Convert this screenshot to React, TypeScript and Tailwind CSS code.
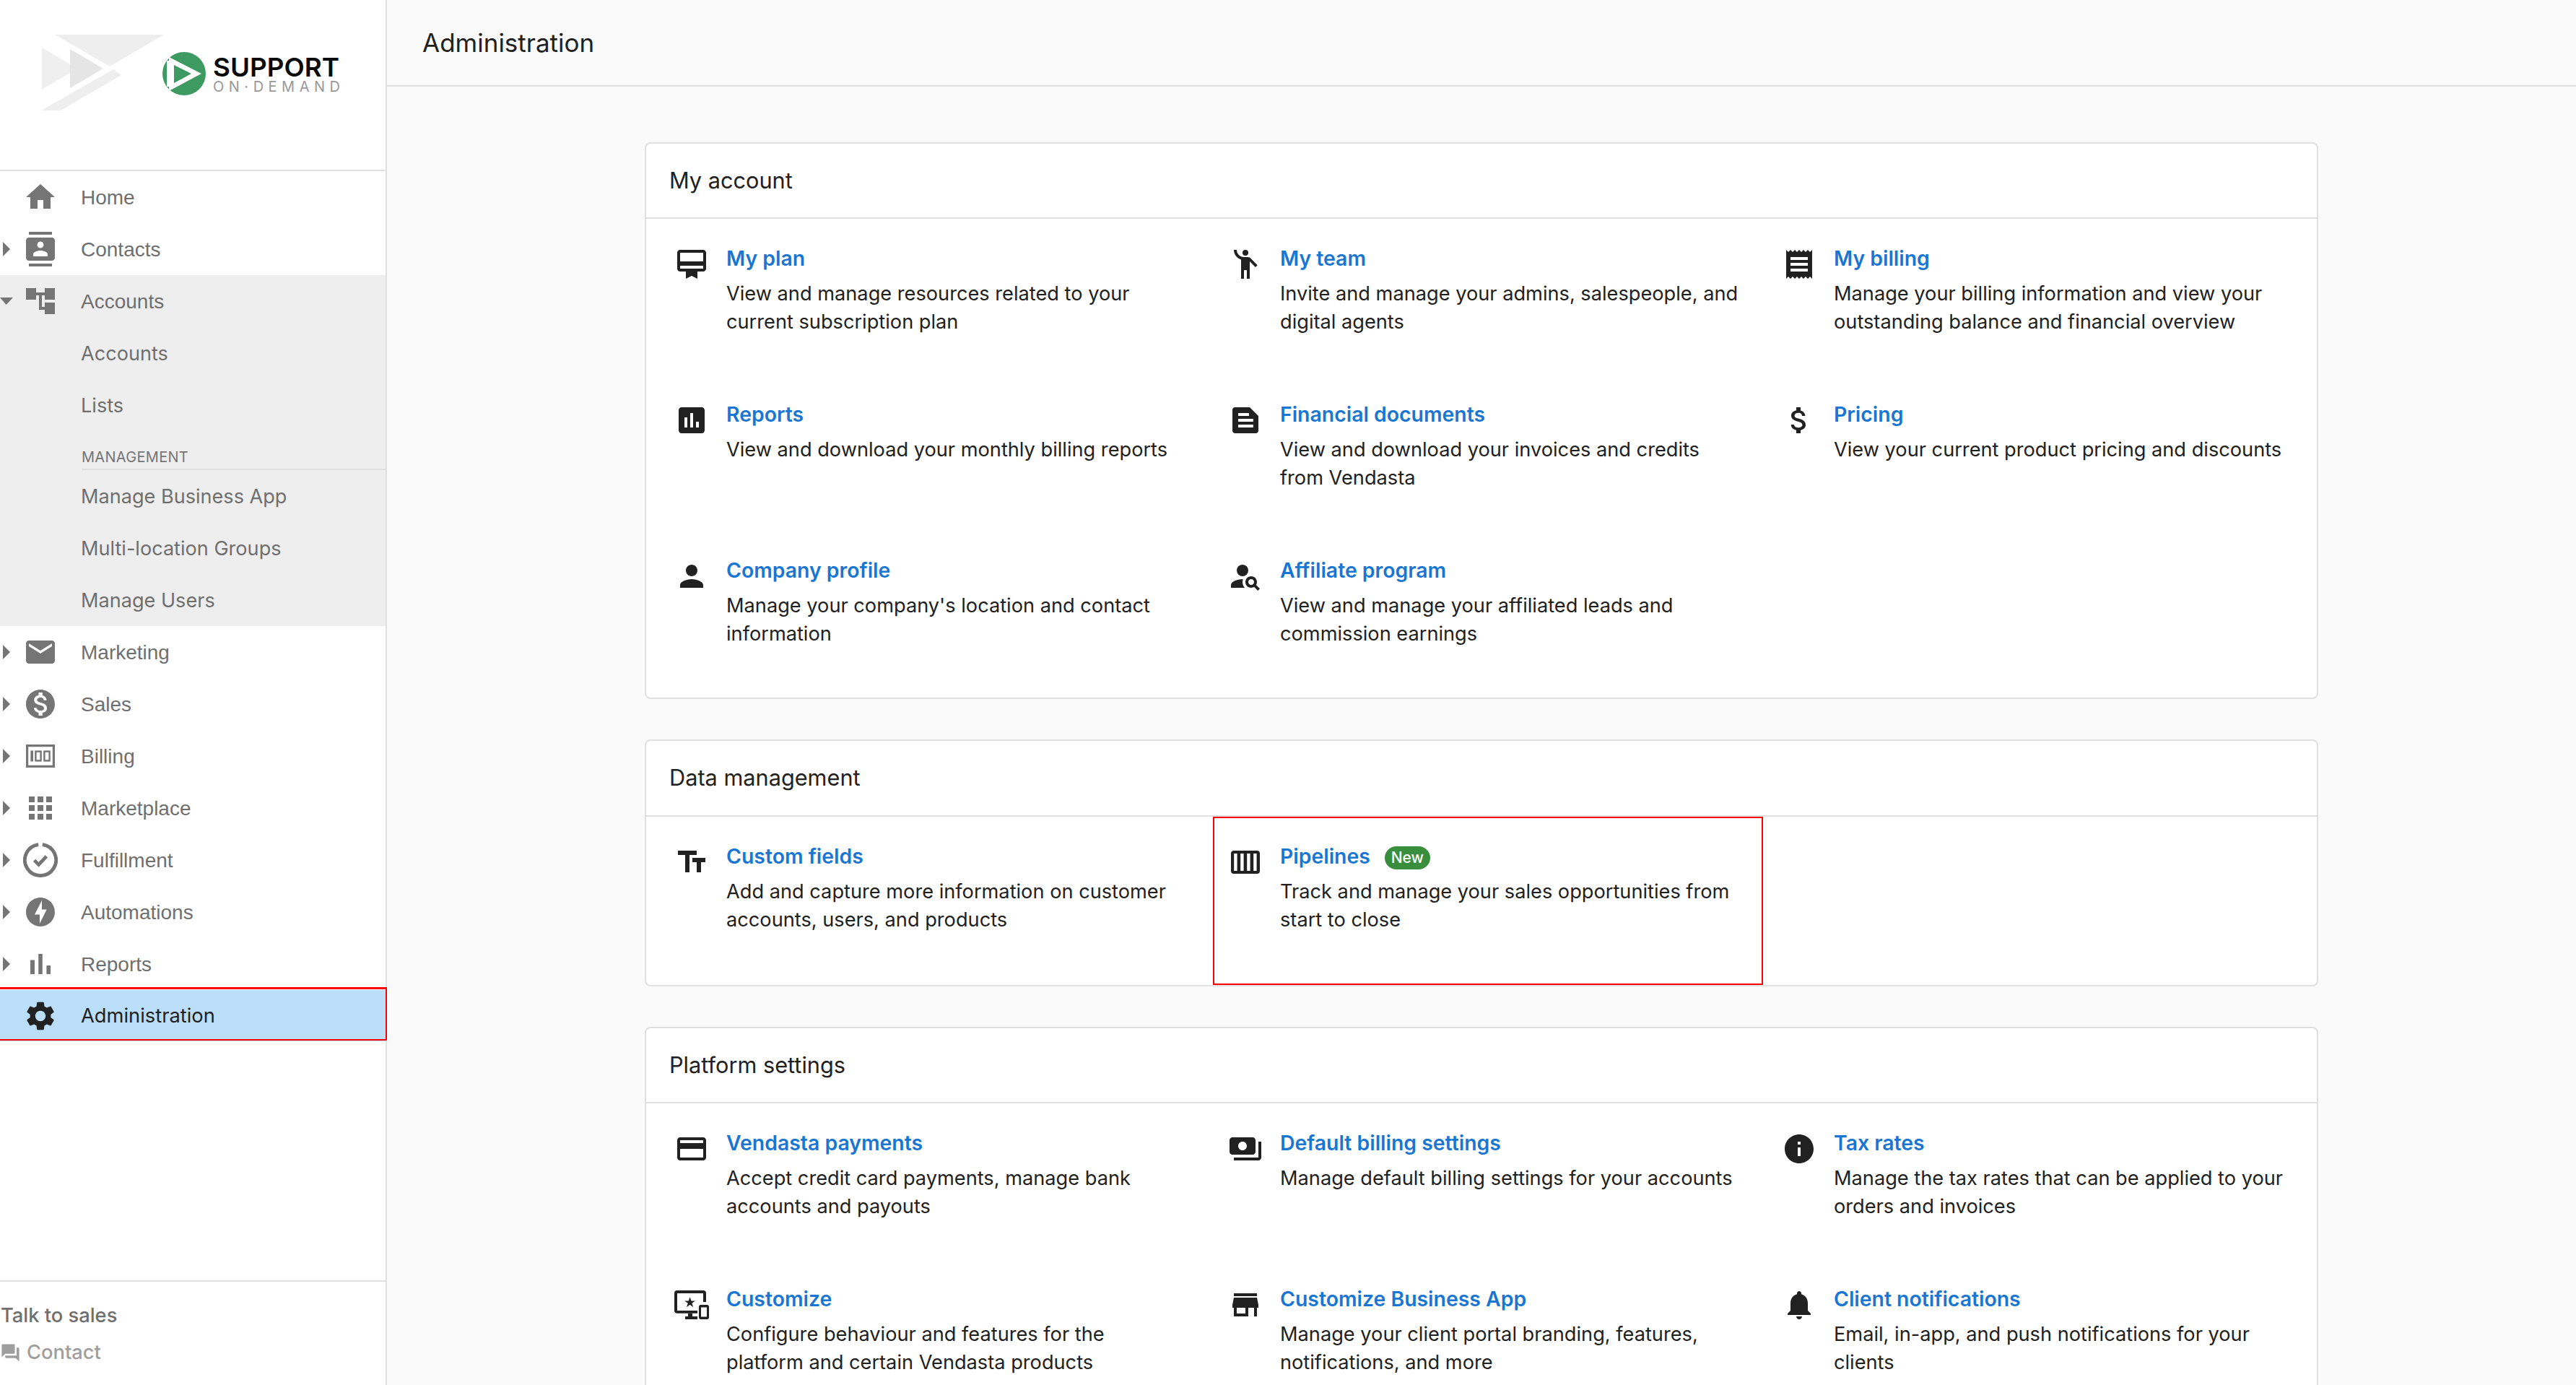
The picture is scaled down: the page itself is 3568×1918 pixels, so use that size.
import React from 'react'

type IconProps = { children: React.ReactNode; className?: string }

const Svg = ({ children, className = 'w-[48px] h-[48px]' }: IconProps) => (
  <svg viewBox="0 0 24 24" fill="currentColor" className={`${className} shrink-0`}>
    {children}
  </svg>
)

// sidebar icons
const navIcons: Record<string, React.ReactNode> = {
  home: <path d="M10 20v-6h4v6h5v-8h3L12 3 2 12h3v8z" />,
  contacts: <path d="M20 0H4v2h16V0zM4 24h16v-2H4v2zM20 4H4c-1.1 0-2 .9-2 2v12c0 1.1.9 2 2 2h16c1.1 0 2-.9 2-2V6c0-1.1-.9-2-2-2zm-8 2.75c1.24 0 2.25 1.01 2.25 2.25s-1.01 2.25-2.25 2.25S9.75 10.24 9.75 9 10.76 6.75 12 6.75zM17 17H7v-1.5c0-1.67 3.33-2.5 5-2.5s5 .83 5 2.5V17z" />,
  accounts: <path d="M22 11V3h-7v3H9V3H2v8h7V8h2v10h4v3h7v-8h-7v3h-2V8h2v3z" />,
  marketing: <path d="M20 4H4c-1.1 0-1.99.9-1.99 2L2 18c0 1.1.9 2 2 2h16c1.1 0 2-.9 2-2V6c0-1.1-.9-2-2-2zm0 4l-8 5-8-5V6l8 5 8-5v2z" />,
  sales: <path d="M12 2C6.48 2 2 6.48 2 12s4.48 10 10 10 10-4.48 10-10S17.52 2 12 2zm1.41 16.09V20h-2.67v-1.93c-1.71-.36-3.16-1.46-3.27-3.4h1.96c.1 1.05.82 1.87 2.65 1.87 1.96 0 2.4-.98 2.4-1.59 0-.83-.44-1.61-2.67-2.14-2.48-.6-4.18-1.62-4.18-3.67 0-1.72 1.39-2.84 3.11-3.21V4h2.67v1.95c1.86.45 2.79 1.86 2.85 3.39H14.3c-.05-1.11-.64-1.87-2.22-1.87-1.5 0-2.4.68-2.4 1.64 0 .84.65 1.39 2.67 1.91s4.18 1.39 4.18 3.91c-.01 1.83-1.38 2.83-3.12 3.16z" />,
  billing: (
    <>
      <rect x="2.8" y="4.8" width="18.4" height="14.4" fill="none" stroke="currentColor" strokeWidth="1.6" />
      <rect x="5.2" y="8.25" width="1.8" height="7.5" />
      <rect x="8.7" y="8.8" width="3.6" height="6.4" fill="none" stroke="currentColor" strokeWidth="1.2" />
      <rect x="14.7" y="8.8" width="3.6" height="6.4" fill="none" stroke="currentColor" strokeWidth="1.2" />
    </>
  ),
  marketplace: <path d="M4 8h4V4H4v4zm6 12h4v-4h-4v4zm-6 0h4v-4H4v4zm0-6h4v-4H4v4zm6 0h4v-4h-4v4zm6-10v4h4V4h-4zm-6 4h4V4h-4v4zm6 6h4v-4h-4v4zm0 6h4v-4h-4v4z" />,
  fulfillment: (
    <>
      <path d="M10.6 1.3A10.8 10.8 0 1 0 13.4 1.3" fill="none" stroke="currentColor" strokeWidth="2.4" />
      <path d="M7.8 12.2l3 3 5.4-5.8" fill="none" stroke="currentColor" strokeWidth="2.4" />
    </>
  ),
  automations: <path d="M12 2.02c-5.51 0-9.98 4.47-9.98 9.98s4.47 9.98 9.98 9.98 9.98-4.47 9.98-9.98S17.51 2.02 12 2.02zM11.48 20v-6.26H8L13 4v6.26h3.35L11.48 20z" />,
  reports: <path d="M5 9.2h3V19H5zM10.6 5h2.8v14h-2.8zm5.6 8H19v6h-2.8z" />,
  settings: <path d="M19.14 12.94c.04-.3.06-.61.06-.94 0-.32-.02-.64-.07-.94l2.03-1.58c.18-.14.23-.41.12-.61l-1.92-3.32c-.12-.22-.37-.29-.59-.22l-2.39.96c-.5-.38-1.03-.7-1.62-.94l-.36-2.54c-.04-.24-.24-.41-.48-.41h-3.84c-.24 0-.43.17-.47.41l-.36 2.54c-.59.24-1.13.57-1.62.94l-2.39-.96c-.22-.08-.47 0-.59.22L2.74 8.87c-.12.21-.08.47.12.61l2.03 1.58c-.05.3-.09.63-.09.94s.02.64.07.94l-2.03 1.58c-.18.14-.23.41-.12.61l1.92 3.32c.12.22.37.29.59.22l2.39-.96c.5.38 1.03.7 1.62.94l.36 2.54c.05.24.24.41.48.41h3.84c.24 0 .44-.17.47-.41l.36-2.54c.59-.24 1.13-.56 1.62-.94l2.39.96c.22.08.47 0 .59-.22l1.92-3.32c.12-.22.07-.47-.12-.61l-2.01-1.58zM12 15.6c-1.98 0-3.6-1.62-3.6-3.6s1.62-3.6 3.6-3.6 3.6 1.62 3.6 3.6-1.62 3.6-3.6 3.6z" />,
}

// card icons
const cardIcons: Record<string, React.ReactNode> = {
  plan: <path d="M20 2H4c-1.11 0-2 .89-2 2v11c0 1.11.89 2 2 2h4v5l4-2 4 2v-5h4c1.11 0 2-.89 2-2V4c0-1.11-.89-2-2-2zm0 13H4v-2h16v2zm0-5H4V4h16v6z" />,
  team: (
    <>
      <circle cx="12" cy="4" r="2" />
      <path d="M15.89 8.11C15.5 7.72 14.83 7 13.53 7c-.21 0-1.42 0-2.54 0C8.24 6.99 6 4.75 6 2H4c0 3.16 2.11 5.84 5 6.71V22h2v-6h2v6h2V10.05L18.95 14l1.41-1.41-4.47-4.48z" />
    </>
  ),
  receipt: <path fillRule="evenodd" d="M18 17H6v-2h12v2zm0-4H6v-2h12v2zm0-4H6V7h12v2zM3 22l1.5-1.5L6 22l1.5-1.5L9 22l1.5-1.5L12 22l1.5-1.5L15 22l1.5-1.5L18 22l1.5-1.5L21 22V2l-1.5 1.5L18 2l-1.5 1.5L15 2l-1.5 1.5L12 2l-1.5 1.5L9 2 7.5 3.5 6 2 4.5 3.5 3 2v20z" />,
  assessment: <path d="M19 3H5c-1.1 0-2 .9-2 2v14c0 1.1.9 2 2 2h14c1.1 0 2-.9 2-2V5c0-1.1-.9-2-2-2zM9 17H7v-7h2v7zm4 0h-2V7h2v10zm4 0h-2v-4h2v4z" />,
  doc: <path fillRule="evenodd" d="M5 3h10l6 6v10a2 2 0 0 1-2 2H5a2 2 0 0 1-2-2V5a2 2 0 0 1 2-2zm2 4v2h7.5V7H7zm0 4v2h10.4v-2H7zm0 4v2h10.4v-2H7z" />,
  money: <path d="M11.8 10.9c-2.27-.59-3-1.2-3-2.15 0-1.09 1.01-1.85 2.7-1.85 1.78 0 2.44.85 2.5 2.1h2.21c-.07-1.72-1.12-3.3-3.21-3.81V3h-3v2.16c-1.94.42-3.5 1.68-3.5 3.61 0 2.31 1.91 3.46 4.7 4.13 2.5.6 3 1.48 3 2.41 0 .69-.49 1.79-2.7 1.79-2.06 0-2.87-.92-2.98-2.1h-2.2c.12 2.19 1.76 3.42 3.68 3.83V21h3v-2.15c1.95-.37 3.5-1.5 3.5-3.55 0-2.84-2.43-3.81-4.7-4.4z" />,
  person: <path d="M12 12c2.21 0 4-1.79 4-4s-1.79-4-4-4-4 1.79-4 4 1.79 4 4 4zm0 2c-2.67 0-8 1.34-8 4v2h16v-2c0-2.66-5.33-4-8-4z" />,
  personSearch: (
    <>
      <circle cx="10" cy="8" r="4" />
      <path d="M10.35 14.01C7.62 13.91 2 15.27 2 18v2h9.54c-2.47-2.76-1.23-5.89-1.19-5.99z" />
      <path d="M19.43 18.02c.36-.59.57-1.28.57-2.02 0-2.21-1.79-4-4-4s-4 1.79-4 4 1.79 4 4 4c.74 0 1.43-.22 2.02-.57L20.59 22 22 20.59l-2.57-2.57zM16 18c-1.1 0-2-.9-2-2s.9-2 2-2 2 .9 2 2-.9 2-2 2z" />
    </>
  ),
  textFields: <path d="M2.5 4v3h5v12h3V7h5V4h-13zm19 5h-9v3h3v7h3v-7h3V9z" />,
  pipeline: <path fillRule="evenodd" d="M4 4h16a2 2 0 0 1 2 2v12a2 2 0 0 1-2 2H4a2 2 0 0 1-2-2V6a2 2 0 0 1 2-2zm.1 2v12h2.2V6H4.1zm4.5 0v12h2.2V6H8.6zm4.5 0v12h2.2V6h-2.2zm4.5 0v12h2.2V6h-2.2z" />,
  card: <path d="M20 4H4c-1.11 0-1.99.89-1.99 2L2 18c0 1.11.89 2 2 2h16c1.11 0 2-.89 2-2V6c0-1.11-.89-2-2-2zm0 14H4v-6h16v6zm0-10H4V6h16v2z" />,
  payments: <path d="M19 14V6c0-1.1-.9-2-2-2H3c-1.1 0-2 .9-2 2v8c0 1.1.9 2 2 2h14c1.1 0 2-.9 2-2zm-9-1c-1.66 0-3-1.34-3-3s1.34-3 3-3 3 1.34 3 3-1.34 3-3 3zm13-6v11c0 1.1-.9 2-2 2H4v-2h17V7h2z" />,
  info: <path d="M12 2C6.48 2 2 6.48 2 12s4.48 10 10 10 10-4.48 10-10S17.52 2 12 2zm1 15h-2v-6h2v6zm0-8h-2V7h2v2z" />,
  customize: (
    <>
      <path d="M16 17.9H2a2 2 0 0 1-2-2V4a2 2 0 0 1 2-2h18a2 2 0 0 1 2 2v6h-2V4H2v12h14z" />
      <path d="M7.5 20h2v-2.1h3V20h3.5v2H7.5z" />
      <path fillRule="evenodd" d="M18.2 12h4.6c.66 0 1.2.54 1.2 1.2v7.6c0 .66-.54 1.2-1.2 1.2h-4.6c-.66 0-1.2-.54-1.2-1.2v-7.6c0-.66.54-1.2 1.2-1.2zm.3 1.8v6.4h4v-6.4h-4z" />
      <path d="M10.8 6.6l.9 2.7h2.8l-2.3 1.6.9 2.7-2.3-1.7-2.3 1.7.9-2.7-2.3-1.6h2.8z" />
    </>
  ),
  store: <path d="M20 4H4v2h16V4zm1 10v-2l-1-5H4l-1 5v2h1v6h10v-6h4v6h2v-6h1zm-9 4H6v-4h6v4z" />,
  bell: <path d="M12 22c1.1 0 2-.9 2-2h-4c0 1.1.89 2 2 2zm6-6v-5c0-3.07-1.64-5.64-4.5-6.32V4c0-.83-.67-1.5-1.5-1.5s-1.5.67-1.5 1.5v.68C7.63 5.36 6 7.92 6 11v5l-2 2v1h16v-1l-2-2z" />,
}

const Logo = () => (
  <svg width="480" height="160" viewBox="0 0 480 160" className="block">
    <polygon points="76,48 227,48 152,92" fill="#eeeeee" />
    <polygon points="58,66 107,95 58,124" fill="#efefef" />
    <polygon points="97,68 143,95 97,122" fill="#e5e5e5" />
    <polygon points="157,96 57,153 84,153 168,104" fill="#eeeeee" />
    <circle cx="255" cy="102" r="30" fill="#3d9b62" />
    <polygon points="234,79 279,102 234,126" fill="#ffffff" />
    <polygon points="241,90 265,102 241,115" fill="#3d9b62" />
    <rect x="231" y="84" width="3" height="36" fill="#ffffff" />
    <text x="295" y="106" fontFamily="Inter, sans-serif" fontWeight="600" fontSize="36" textLength="175" lengthAdjust="spacingAndGlyphs" fill="#0a0a0a">
      SUPPORT
    </text>
    <text x="295" y="126.5" fontFamily="Inter, sans-serif" fontWeight="400" fontSize="20" textLength="176" lengthAdjust="spacing" fill="#999999">
      ON·DEMAND
    </text>
  </svg>
)

const Chevron = ({ open }: { open?: boolean }) =>
  open ? (
    <svg width="18" height="10" viewBox="0 0 18 10" className="text-[#757575]">
      <polygon points="0,0 18,0 8.6,10" fill="currentColor" />
    </svg>
  ) : (
    <svg width="10" height="20" viewBox="0 0 10 20" className="ml-[4px] text-[#757575]">
      <polygon points="0,0 10,10 0,20" fill="currentColor" />
    </svg>
  )

const NavRow = ({ label, icon, arrow, open }: { label: string; icon: string; arrow?: boolean; open?: boolean }) => (
  <div className="flex h-[72px] items-center text-[#757575]">
    <div className="flex w-[32px] shrink-0 items-center">{arrow && <Chevron open={open} />}</div>
    <Svg>{navIcons[icon]}</Svg>
    <span className="ml-[32px] mt-[2px] font-['Liberation_Sans',sans-serif] text-[28px] text-[#6f6f6f]">{label}</span>
  </div>
)

const SubRow = ({ label }: { label: string }) => (
  <div className="flex h-[72px] items-center pl-[112px] pt-[2px] text-[27.1px] text-[#6f6f6f]">{label}</div>
)

const Sidebar = () => (
  <aside className="flex h-full w-[536px] shrink-0 flex-col border-r-2 border-[#e0e0e0] bg-white">
    <div className="h-[237px] shrink-0 border-b-2 border-[#e0e0e0]">
      <Logo />
    </div>
    <NavRow label="Home" icon="home" />
    <NavRow label="Contacts" icon="contacts" arrow />
    <div className="bg-[#eeeeee]">
      <NavRow label="Accounts" icon="accounts" arrow open />
      <SubRow label="Accounts" />
      <SubRow label="Lists" />
      <div className="ml-[113px] flex h-[54px] items-end border-b-2 border-[#e0e0e0] pb-[2px] text-[20px] leading-[28px] tracking-[0.3px] text-[#757575]">
        MANAGEMENT
      </div>
      <SubRow label="Manage Business App" />
      <SubRow label="Multi-location Groups" />
      <SubRow label="Manage Users" />
    </div>
    <NavRow label="Marketing" icon="marketing" arrow />
    <NavRow label="Sales" icon="sales" arrow />
    <NavRow label="Billing" icon="billing" arrow />
    <NavRow label="Marketplace" icon="marketplace" arrow />
    <NavRow label="Fulfillment" icon="fulfillment" arrow />
    <NavRow label="Automations" icon="automations" arrow />
    <NavRow label="Reports" icon="reports" arrow />
    <div className="relative flex h-[71px] items-center bg-[#bbdefb] pl-[32px] pt-[1px] text-[#212121]">
      <Svg>{navIcons.settings}</Svg>
      <span className="ml-[32px] text-[27.3px]">Administration</span>
      <div className="absolute -top-[4px] -left-[4px] -right-[2px] bottom-[1px] border-[3px] border-b-2 border-r-2 border-[#ff0000]" />
    </div>
    <div className="mt-auto h-[145px] border-t-2 border-[#e0e0e0] font-medium">
      <div className="mt-[30px] pl-[1px] text-[27.3px] leading-[34px] text-[#6f6f6f]">Talk to sales</div>
      <div className="mt-[17px] flex items-center text-[27.3px] leading-[34px] text-[#9e9e9e]">
        <Svg className="h-[29px] w-[29px]">
          <path d="M21 6h-2v9H6v2c0 .55.45 1 1 1h11l4 4V7c0-.55-.45-1-1-1zm-4 6V3c0-.55-.45-1-1-1H3c-.55 0-1 .45-1 1v14l4-4h10c.55 0 1-.45 1-1z" />
        </Svg>
        <span className="ml-[8px]">Contact</span>
      </div>
    </div>
  </aside>
)

type Entry = { icon: string; title: string; desc: string; isNew?: boolean; marked?: boolean }

const Item = ({ icon, title, desc, isNew, marked }: Entry) => (
  <div className={`flex gap-[24px] pl-[21px] pt-[36px] ${marked ? 'outline-2 -outline-offset-2 outline-[#ff0000]' : ''}`}>
    <div className="pt-[3px] text-[#212121]">
      <Svg>{cardIcons[icon]}</Svg>
    </div>
    <div className="w-[637px]">
      <div className="flex h-[38px] items-center gap-[20px]">
        <span className="text-[28.4px] font-semibold leading-[38px] text-[#1976d2]">{title}</span>
        {isNew && (
          <span className="mt-[3px] flex h-[32px] w-[63px] items-center justify-center rounded-full bg-[#388e3c] text-[21px] font-medium text-white">
            New
          </span>
        )}
      </div>
      <p className="mt-[10px] whitespace-pre-line text-[27.2px] leading-[39px] text-[#212121]">{desc}</p>
    </div>
  </div>
)

type SectionProps = { title: string; items: Entry[]; headerClass: string; gridClass: string }

const Section = ({ title, items, headerClass, gridClass }: SectionProps) => (
  <section className="w-[2318px] shrink-0 rounded-[8px] border-2 border-[#e0e0e0] bg-white">
    <div className={`flex items-center border-b-2 border-[#e0e0e0] pl-[32px] text-[30.7px] text-[#212121] ${headerClass}`}>{title}</div>
    <div className={`grid grid-cols-[repeat(3,762px)] gap-x-[5px] pl-[18px] ${gridClass}`}>
      {items.map((item) => (
        <Item key={item.title} {...item} />
      ))}
    </div>
  </section>
)

const myAccount: Entry[] = [
  { icon: 'plan', title: 'My plan', desc: 'View and manage resources related to your current subscription plan' },
  { icon: 'team', title: 'My team', desc: 'Invite and manage your admins, salespeople, and digital agents' },
  { icon: 'receipt', title: 'My billing', desc: 'Manage your billing information and view your outstanding balance and financial overview' },
  { icon: 'assessment', title: 'Reports', desc: 'View and download your monthly billing reports' },
  { icon: 'doc', title: 'Financial documents', desc: 'View and download your invoices and credits from Vendasta' },
  { icon: 'money', title: 'Pricing', desc: 'View your current product pricing and discounts' },
  { icon: 'person', title: 'Company profile', desc: "Manage your company's location and contact information" },
  { icon: 'personSearch', title: 'Affiliate program', desc: 'View and manage your affiliated leads and commission earnings' },
]

const dataManagement: Entry[] = [
  { icon: 'textFields', title: 'Custom fields', desc: 'Add and capture more information on customer accounts, users, and products' },
  { icon: 'pipeline', title: 'Pipelines', desc: 'Track and manage your sales opportunities from start to close', isNew: true, marked: true },
]

const platform: Entry[] = [
  { icon: 'card', title: 'Vendasta payments', desc: 'Accept credit card payments, manage bank accounts and payouts' },
  { icon: 'payments', title: 'Default billing settings', desc: 'Manage default billing settings for your accounts' },
  { icon: 'info', title: 'Tax rates', desc: 'Manage the tax rates that can be applied to your orders and invoices' },
  { icon: 'customize', title: 'Customize', desc: 'Configure behaviour and features for the\nplatform and certain Vendasta products' },
  { icon: 'store', title: 'Customize Business App', desc: 'Manage your client portal branding, features, notifications, and more' },
  { icon: 'bell', title: 'Client notifications', desc: 'Email, in-app, and push notifications for your clients' },
]

export default function App() {
  return (
    <div className="flex h-[1918px] w-[3568px] overflow-hidden bg-[#fafafa] font-['Inter',sans-serif]">
      <Sidebar />
      <main className="min-w-0 flex-1">
        <header className="flex h-[120px] items-center border-b-2 border-[#e0e0e0] pl-[49px] text-[35px] text-[#212121]">
          Administration
        </header>
        <div className="flex flex-col gap-[56px] pl-[357px] pt-[77px]">
          <Section title="My account" items={myAccount} headerClass="h-[104px]" gridClass="auto-rows-[216px] pb-[15px]" />
          <Section title="Data management" items={dataManagement} headerClass="h-[105px]" gridClass="auto-rows-[233px]" />
          <Section title="Platform settings" items={platform} headerClass="h-[104px]" gridClass="auto-rows-[216px]" />
        </div>
      </main>
    </div>
  )
}
